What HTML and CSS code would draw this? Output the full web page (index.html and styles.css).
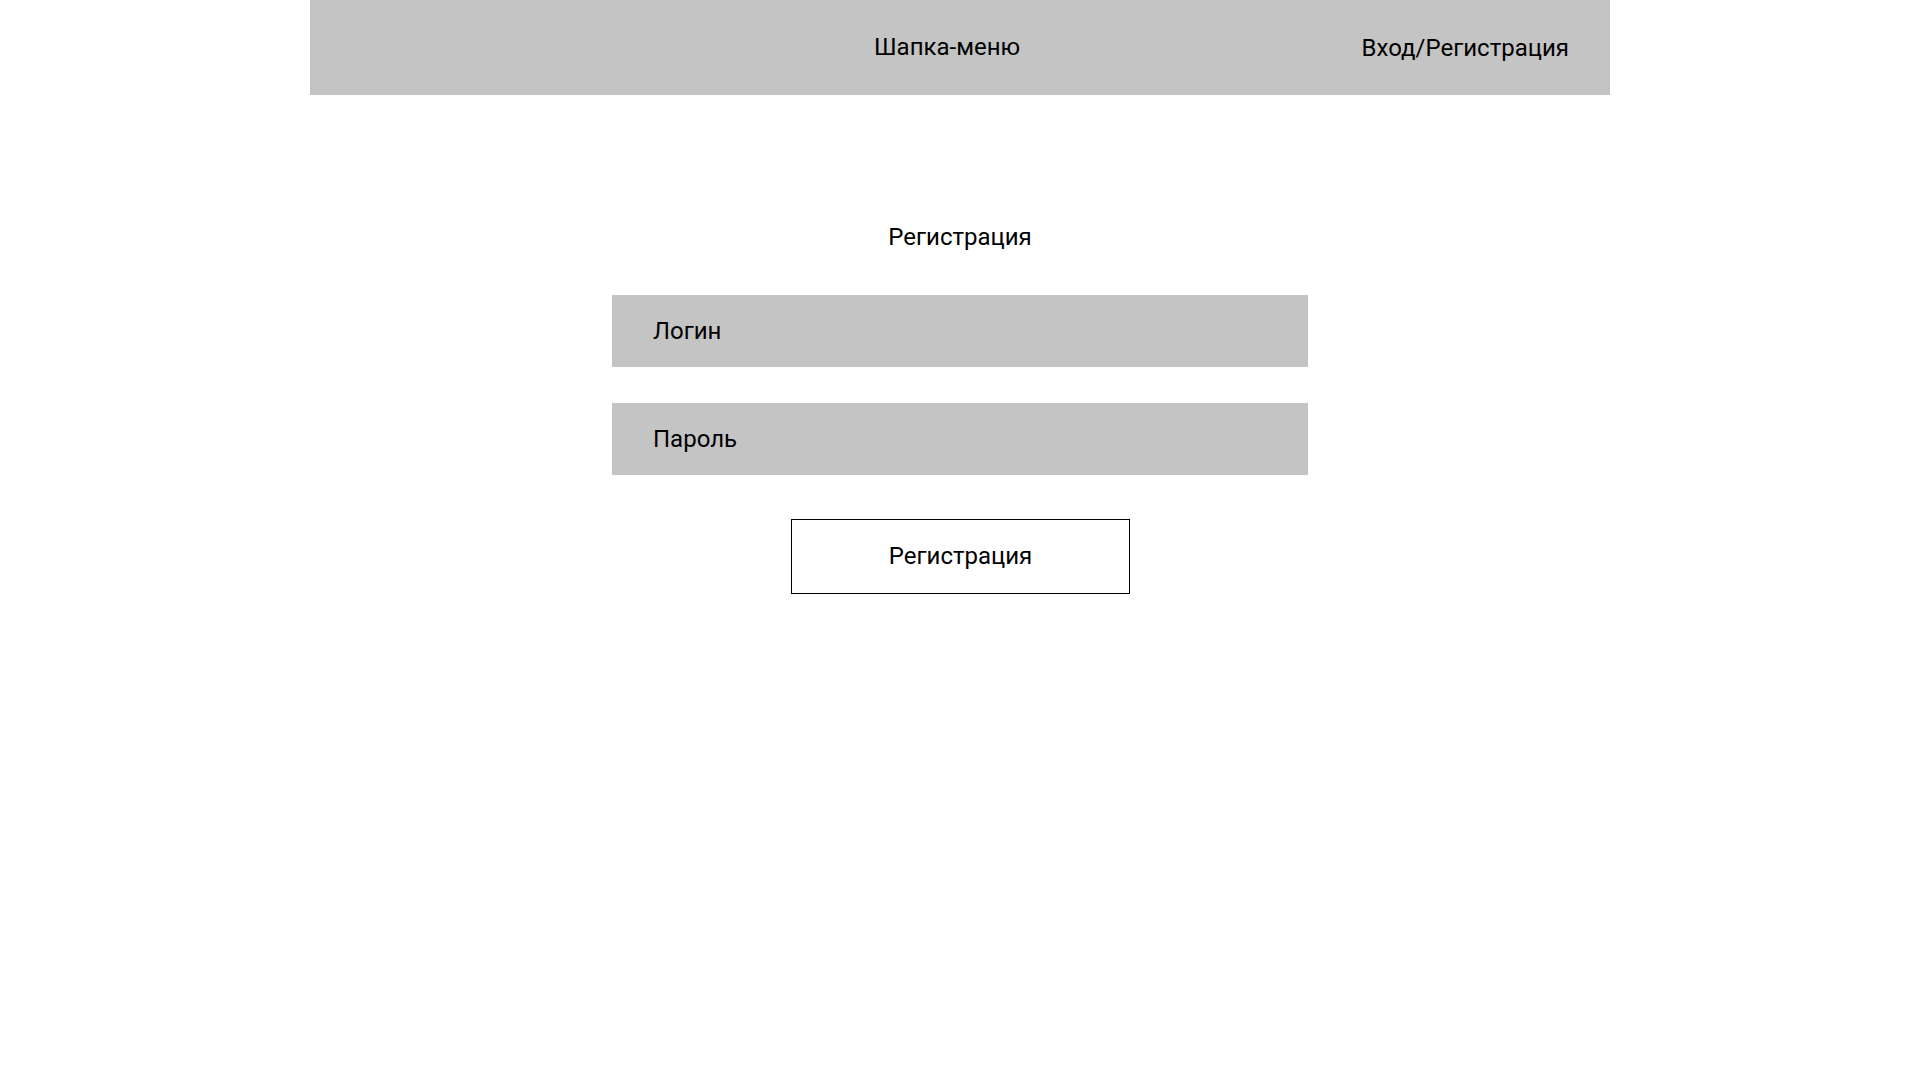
FILE: index.html
```html
<!DOCTYPE html>
<html lang="ru">
<head>
<meta charset="utf-8">
<title>Регистрация</title>
<link rel="stylesheet" href="styles.css">
</head>
<body>
<header class="header">
  <div class="header-menu">Шапка-меню</div>
  <div class="header-auth">Вход/Регистрация</div>
</header>
<main class="main">
  <h1 class="title">Регистрация</h1>
  <div class="field">Логин</div>
  <div class="field">Пароль</div>
  <button class="btn">Регистрация</button>
</main>
</body>
</html>
```
FILE: styles.css
```css
html, body {
  margin: 0;
  padding: 0;
  background: #ffffff;
}
body {
  font-family: Roboto, "Liberation Sans", sans-serif;
  font-size: 24px;
  color: #000000;
}
.header {
  width: 1300px;
  height: 95px;
  margin: 0 auto;
  background: #c4c4c4;
  display: flex;
  align-items: center;
  box-sizing: border-box;
  padding-right: 41px;
  line-height: 28px;
}
.header-menu {
  margin-left: 564px;
  padding-bottom: 2px;
}
.header-auth {
  margin-left: auto;
}
.main {
  display: flex;
  flex-direction: column;
  align-items: center;
  padding-top: 128px;
}
.title {
  margin: 0;
  font-size: 24px;
  font-weight: 400;
  line-height: 28px;
}
.field {
  width: 696px;
  height: 72px;
  box-sizing: border-box;
  background: #c4c4c4;
  display: flex;
  align-items: center;
  padding: 0 41px;
  margin-top: 36px;
}
.title + .field {
  margin-top: 44px;
}
.btn {
  margin-top: 44px;
  width: 339px;
  height: 75px;
  box-sizing: border-box;
  border: 1px solid #000000;
  background: #ffffff;
  font-family: inherit;
  font-size: 24px;
  color: #000000;
  padding: 0 0 2px 0;
  margin-left: 1px;
}
```
